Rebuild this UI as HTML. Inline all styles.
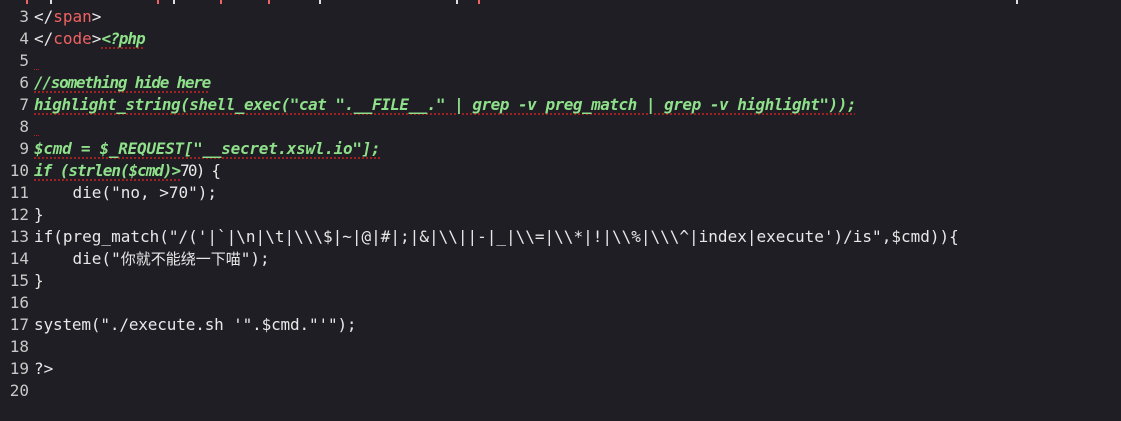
<!DOCTYPE html>
<html><head><meta charset="utf-8"><style>
html,body{margin:0;padding:0;background:#1e1e24;width:1121px;height:421px;overflow:hidden}
body{font-family:"DejaVu Sans Mono","Liberation Mono","Noto Sans CJK SC",monospace;font-size:16px;color:#e8e8e8;position:relative}
.l{position:absolute;left:0;height:22px;line-height:22px;white-space:pre}
.n{display:inline-block;width:29px;text-align:right;color:#c8c8c8;margin-right:5px}
.r{color:#f06262}
.g{color:#8fe08a;font-style:italic;font-weight:bold;text-decoration:underline dotted #c02020;text-underline-offset:4px}
.cj{font-family:"Noto Sans CJK SC",sans-serif;font-size:15px}
.tk{position:absolute;top:0;width:2px;height:4px}
.e{display:inline-block;width:5px;height:22px;vertical-align:top;background:linear-gradient(90deg,#c02020 50%,transparent 50%) 0 19px/2px 1px repeat-x}
</style></head><body>
<div class="tk" style="left:26px;background:#f06262"></div>
<div class="tk" style="left:50px;background:#ddd"></div>
<div class="tk" style="left:157px;background:#f06262"></div>
<div class="tk" style="left:173px;background:#ddd"></div>
<div class="tk" style="left:220px;background:#f06262"></div>
<div class="tk" style="left:268px;background:#f06262"></div>
<div class="tk" style="left:319px;background:#ddd"></div>
<div class="tk" style="left:478px;background:#f06262"></div>
<div class="tk" style="left:456px;background:#ddd"></div>
<div class="tk" style="left:1016px;background:#ddd"></div>
<div class="l" style="top:6px"><span class="n">3</span>&lt;/<span class="r">span</span>&gt;</div>
<div class="l" style="top:28px"><span class="n">4</span>&lt;/<span class="r">code</span>&gt;<span class="g" style="letter-spacing:-1px">&lt;?php</span></div>
<div class="l" style="top:50px"><span class="n">5</span><span class="e"></span></div>
<div class="l" style="top:72px"><span class="n">6</span><span class="g" style="letter-spacing:-1.25px">//something hide here</span></div>
<div class="l" style="top:94px"><span class="n">7</span><span class="g" style="letter-spacing:-0.5px">highlight_string(shell_exec("cat ".__FILE__." | grep -v preg_match | grep -v highlight"));</span></div>
<div class="l" style="top:116px"><span class="n">8</span><span class="e"></span></div>
<div class="l" style="top:138px"><span class="n">9</span><span class="g" style="letter-spacing:-0.27px">$cmd = $_REQUEST["__secret.xswl.io"];</span></div>
<div class="l" style="top:160px"><span class="n">10</span><span class="g" style="letter-spacing:-1.04px">if (strlen($cmd)&gt;</span><span style="letter-spacing:-1.8px">70) {</span></div>
<div class="l" style="top:182px"><span class="n">11</span>    die("no, &gt;70");</div>
<div class="l" style="top:204px"><span class="n">12</span>}</div>
<div class="l" style="top:226px"><span class="n">13</span>if(preg_match("/('|`|\n|\t|\\\$|~|@|#|;|&amp;|\\||-|_|\\=|\\*|!|\\%|\\\^|index|execute')/is",$cmd)){</div>
<div class="l" style="top:248px"><span class="n">14</span>    die("<span class="cj">你就不能绕一下喵</span>");</div>
<div class="l" style="top:270px"><span class="n">15</span>}</div>
<div class="l" style="top:292px"><span class="n">16</span></div>
<div class="l" style="top:314px"><span class="n">17</span><span style="letter-spacing:-0.15px">system("./execute.sh '".$cmd."'");</span></div>
<div class="l" style="top:336px"><span class="n">18</span></div>
<div class="l" style="top:358px"><span class="n">19</span>?&gt;</div>
<div class="l" style="top:380px"><span class="n">20</span></div>
</body></html>
